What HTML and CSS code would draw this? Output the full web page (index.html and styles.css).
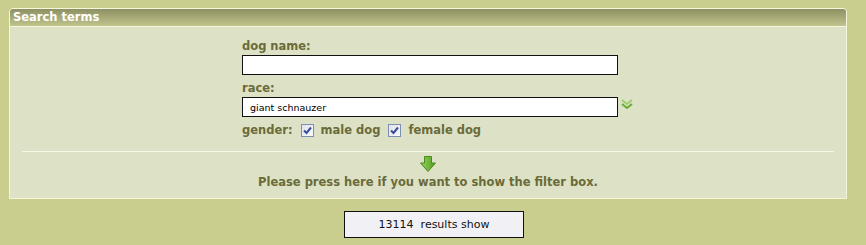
FILE: index.html
```html
<!DOCTYPE html>
<html>
<head>
<meta charset="utf-8">
<link rel="stylesheet" href="styles.css">
</head>
<body>
<div class="panel">
  <div class="panel-head">Search terms</div>
  <div class="panel-body">
    <div class="form">
      <div class="label">dog name:</div>
      <div class="row"><input class="field" type="text" value=""></div>
      <div class="label">race:</div>
      <div class="row">
        <input class="field" type="text" value="giant schnauzer">
        <svg class="chev" width="12" height="10" viewBox="0 0 12 10">
          <path d="M1 1 L6 5 L11 1" fill="none" stroke="#9ccd6a" stroke-width="2"/>
          <path d="M1 5 L6 9 L11 5" fill="none" stroke="#6aab38" stroke-width="2"/>
        </svg>
      </div>
      <div class="gender">
        <span class="label-inline">gender:</span>
        <span class="cb"><svg width="9" height="9" viewBox="0 0 9 9"><path d="M1 4.5 L3.5 7 L8 1.5" fill="none" stroke="#3a4c9a" stroke-width="2"/></svg></span>
        <span class="label-inline">male dog</span>
        <span class="cb"><svg width="9" height="9" viewBox="0 0 9 9"><path d="M1 4.5 L3.5 7 L8 1.5" fill="none" stroke="#3a4c9a" stroke-width="2"/></svg></span>
        <span class="label-inline">female dog</span>
      </div>
    </div>
    <div class="divider"></div>
    <div class="toggle">
      <svg class="arrow" width="18" height="17" viewBox="0 0 18 17">
        <defs>
          <linearGradient id="ag" x1="0" y1="0" x2="1" y2="0">
            <stop offset="0" stop-color="#9ad45a"/>
            <stop offset="1" stop-color="#4f9a22"/>
          </linearGradient>
        </defs>
        <path d="M5.5 0.5 H12.5 V7 H16.5 L9 15.5 L1.5 7 H5.5 Z" fill="url(#ag)" stroke="#4a8a20" stroke-width="1"/>
      </svg>
      <div class="toggle-text">Please press here if you want to show the filter box.</div>
    </div>
  </div>
</div>
<div class="actions">
  <button class="results">13114&nbsp; results show</button>
</div>
</body>
</html>
```
FILE: styles.css
```css
html, body {
  margin: 0;
  padding: 0;
}
body {
  background: #c9cd8e;
  font-family: "DejaVu Sans", Verdana, sans-serif;
  width: 866px;
  height: 245px;
  overflow: hidden;
}
.panel {
  margin: 8px 19px 0 9px;
  border: 1px solid #f6f6dc;
  border-radius: 4px 4px 0 0;
  background: #dde2c6;
}
.panel-head {
  height: 17px;
  line-height: 17px;
  padding-left: 3px;
  color: #ffffff;
  font-weight: bold;
  font-size: 11.5px;
  background: linear-gradient(#8d9062, #c1c48c);
  border-bottom: 1px solid #f6f6dc;
  border-radius: 3px 3px 0 0;
}
.panel-body {
  padding: 12px 12px 9px 12px;
}
.form {
  padding-left: 220px;
  display: flex;
  flex-direction: column;
}
.label, .label-inline {
  color: #6a6b39;
  font-weight: bold;
  font-size: 11.5px;
  line-height: 14px;
}
.label {
  margin-bottom: 2px;
}
.row {
  display: flex;
  align-items: center;
  gap: 3px;
  margin-bottom: 6px;
}
.field {
  box-sizing: border-box;
  width: 376px;
  height: 20px;
  margin: 0;
  padding: 1px 7px 0 7px;
  border: 1px solid #111111;
  background: #ffffff;
  font-family: "DejaVu Sans", Verdana, sans-serif;
  font-size: 9.5px;
  color: #000;
  outline: none;
}
.chev {
  margin-top: -6px;
}
.gender {
  display: flex;
  align-items: center;
  height: 14px;
}
.gender .label-inline {
  margin-right: 8px;
}
.cb {
  box-sizing: border-box;
  width: 13px;
  height: 13px;
  border: 1px solid #7c90b4;
  background: linear-gradient(135deg, #dfe3ea, #f8f9fb);
  display: flex;
  align-items: center;
  justify-content: center;
  margin-right: 7px;
}
.divider {
  height: 1px;
  background: #f7f7e6;
  margin-top: 14px;
}
.toggle {
  display: flex;
  flex-direction: column;
  align-items: center;
  padding-top: 4px;
}
.arrow {
  display: block;
}
.toggle-text {
  color: #6a6b39;
  font-weight: bold;
  font-size: 11.5px;
  line-height: 14px;
  margin-top: 2px;
}
.actions {
  padding: 12px 0 0 344px;
}
.results {
  box-sizing: border-box;
  width: 180px;
  height: 27px;
  margin: 0;
  border: 1px solid #111111;
  background: #f1f1f5;
  font-family: "DejaVu Sans", Verdana, sans-serif;
  font-size: 11px;
  color: #111;
  padding: 0;
}
```
